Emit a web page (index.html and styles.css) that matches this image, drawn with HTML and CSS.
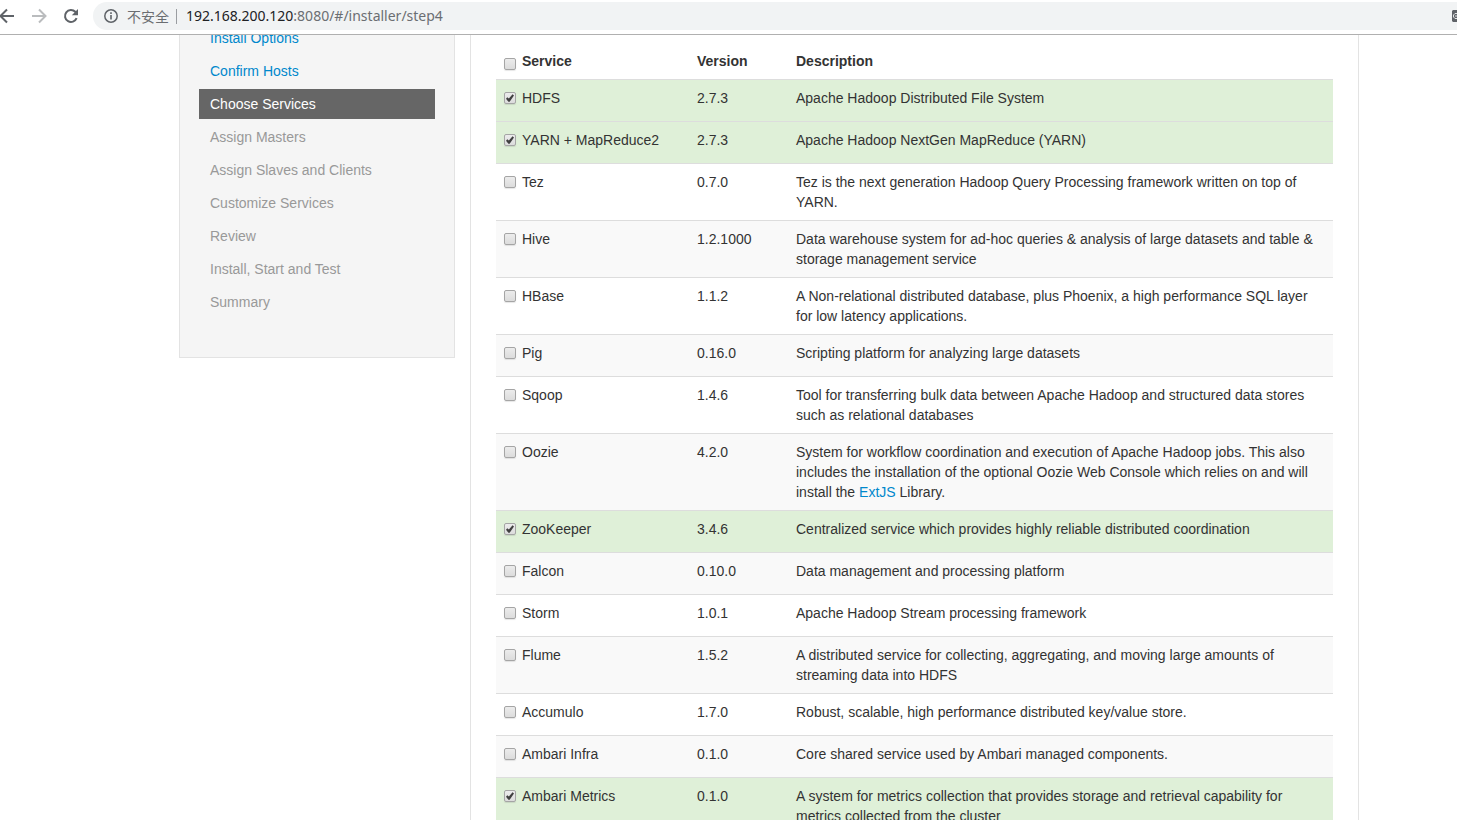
FILE: index.html
```html
<!DOCTYPE html>
<html lang="en">
<head>
<meta charset="utf-8">
<title>Ambari - Choose Services</title>
<link rel="stylesheet" href="styles.css">
</head>
<body>
<header class="toolbar">
  <div class="nav-buttons">
    <button class="tool-button" type="button" aria-label="Back">
      <svg width="16" height="16" viewBox="0 0 16 16"><path d="M15 8H2M8 1.500L1.500 8 8 14.500" fill="none" stroke="#5f6368" stroke-width="2"/></svg>
    </button>
    <button class="tool-button" type="button" aria-label="Forward" disabled>
      <svg width="16" height="16" viewBox="0 0 16 16"><path d="M1 8H14M8 1.500L14.500 8 8 14.500" fill="none" stroke="#babcbe" stroke-width="2"/></svg>
    </button>
    <button class="tool-button" type="button" aria-label="Reload">
      <svg width="16" height="16" viewBox="0 0 16 16"><path d="M13.600 10.200A6 6 0 1 1 12.300 3.800L14 5.500" fill="none" stroke="#5f6368" stroke-width="2"/><path d="M15 1V7.200H8.800Z" fill="#5f6368"/></svg>
    </button>
  </div>
  <div class="address-bar">
    <svg class="info-icon" width="14" height="14" viewBox="0 0 14 14"><circle cx="7" cy="7" r="6.200" fill="none" stroke="#5f6368" stroke-width="1.500"/><path d="M7 6V10.500M7 3.300V4.900" stroke="#5f6368" stroke-width="1.600"/></svg>
    <span class="security">不安全</span>
    <div class="url" role="textbox" aria-label="Address" contenteditable="true" spellcheck="false"><span class="url-host">192.168.200.120</span>:8080/#/installer/step4</div>
    <svg class="translate-icon" width="5" height="12" viewBox="0 0 5 12"><path d="M1 0H5V12H1L0 11V1Z" fill="#5f6368"/><path d="M5 3.500H3L1.500 5V7L3 8.500H5M3 6H5" fill="none" stroke="#e4e5e6" stroke-width="1"/></svg>
  </div>
</header>
<main class="page">
  <nav class="sidebar" aria-label="Installer steps">
    <ul class="steps">
      <li><a class="step" href="#step2">Install Options</a></li>
      <li><a class="step" href="#step3">Confirm Hosts</a></li>
      <li><a class="step step-active" href="#step4" aria-current="step">Choose Services</a></li>
      <li><a class="step step-disabled" href="#step5">Assign Masters</a></li>
      <li><a class="step step-disabled" href="#step6">Assign Slaves and Clients</a></li>
      <li><a class="step step-disabled" href="#step7">Customize Services</a></li>
      <li><a class="step step-disabled" href="#step8">Review</a></li>
      <li><a class="step step-disabled" href="#step9">Install, Start and Test</a></li>
      <li><a class="step step-disabled" href="#step10">Summary</a></li>
    </ul>
  </nav>
  <section class="panel">
    <table class="services">
      <colgroup><col class="col-service"><col class="col-version"><col></colgroup>
      <thead>
        <tr><th><label class="check check-all"><input type="checkbox"><span>Service</span></label></th><th>Version</th><th>Description</th></tr>
      </thead>
      <tbody>
        <tr class="selected"><td><label class="check"><input type="checkbox" checked>HDFS</label></td><td>2.7.3</td><td>Apache Hadoop Distributed File System</td></tr>
        <tr class="selected"><td><label class="check"><input type="checkbox" checked>YARN + MapReduce2</label></td><td>2.7.3</td><td>Apache Hadoop NextGen MapReduce (YARN)</td></tr>
        <tr><td><label class="check"><input type="checkbox">Tez</label></td><td>0.7.0</td><td>Tez is the next generation Hadoop Query Processing framework written on top of YARN.</td></tr>
        <tr><td><label class="check"><input type="checkbox">Hive</label></td><td>1.2.1000</td><td>Data warehouse system for ad-hoc queries &amp; analysis of large datasets and table &amp; storage management service</td></tr>
        <tr><td><label class="check"><input type="checkbox">HBase</label></td><td>1.1.2</td><td>A Non-relational distributed database, plus Phoenix, a high performance SQL layer for low latency applications.</td></tr>
        <tr><td><label class="check"><input type="checkbox">Pig</label></td><td>0.16.0</td><td>Scripting platform for analyzing large datasets</td></tr>
        <tr><td><label class="check"><input type="checkbox">Sqoop</label></td><td>1.4.6</td><td>Tool for transferring bulk data between Apache Hadoop and structured data stores such as relational databases</td></tr>
        <tr><td><label class="check"><input type="checkbox">Oozie</label></td><td>4.2.0</td><td>System for workflow coordination and execution of Apache Hadoop jobs. This also includes the installation of the optional Oozie Web Console which relies on and will install the <a href="#extjs">ExtJS</a> Library.</td></tr>
        <tr class="selected"><td><label class="check"><input type="checkbox" checked>ZooKeeper</label></td><td>3.4.6</td><td>Centralized service which provides highly reliable distributed coordination</td></tr>
        <tr><td><label class="check"><input type="checkbox">Falcon</label></td><td>0.10.0</td><td>Data management and processing platform</td></tr>
        <tr><td><label class="check"><input type="checkbox">Storm</label></td><td>1.0.1</td><td>Apache Hadoop Stream processing framework</td></tr>
        <tr><td><label class="check"><input type="checkbox">Flume</label></td><td>1.5.2</td><td>A distributed service for collecting, aggregating, and moving large amounts of streaming data into HDFS</td></tr>
        <tr><td><label class="check"><input type="checkbox">Accumulo</label></td><td>1.7.0</td><td>Robust, scalable, high performance distributed key/value store.</td></tr>
        <tr><td><label class="check"><input type="checkbox">Ambari Infra</label></td><td>0.1.0</td><td>Core shared service used by Ambari managed components.</td></tr>
        <tr class="selected"><td><label class="check"><input type="checkbox" checked>Ambari Metrics</label></td><td>0.1.0</td><td>A system for metrics collection that provides storage and retrieval capability for metrics collected from the cluster</td></tr>
      </tbody>
    </table>
  </section>
</main>
</body>
</html>
```
FILE: styles.css
```css
* { box-sizing: border-box; }

body {
  margin: 0;
  height: 100vh;
  display: flex;
  flex-direction: column;
  overflow: hidden;
  background: #fff;
  color: #333;
  font: 14px/20px "Liberation Sans", Arial, sans-serif;
}

a { color: #0088cc; text-decoration: none; }

/* Browser toolbar */
.toolbar {
  flex: none;
  display: flex;
  height: 35px;
  padding: 2px 0 4px;
  border-bottom: 1px solid #b0b0b0;
}

.nav-buttons {
  display: flex;
  align-items: center;
  gap: 16px;
  width: 93px;
  margin-left: -1px;
  margin-right: 1px;
}

.tool-button {
  display: flex;
  padding: 0;
  border: 0;
  background: none;
}

.address-bar {
  flex: 1;
  display: flex;
  align-items: center;
  padding-left: 11px;
  border-radius: 14px 0 0 14px;
  background: #f1f3f4;
  color: #6b6e72;
  font-family: "Noto Sans", "Noto Sans CJK SC", sans-serif;
}

.info-icon { margin-right: 9px; }

.security {
  padding-right: 7px;
  border-right: 1px solid #9a9da1;
  font-family: "Noto Sans CJK SC", sans-serif;
  line-height: 15px;
}

.url { flex: 1; padding-left: 9px; outline: 0; white-space: nowrap; }
.url-host { color: #202124; }

/* Page layout */
.page {
  flex: 1;
  min-height: 0;
  display: flex;
  align-items: flex-start;
  gap: 15px;
  padding: 0 98px 0 179px;
  overflow: hidden;
}

.sidebar {
  flex: none;
  width: 276px;
  padding: 0 19px 40px;
  border: 1px solid #e3e3e3;
  border-top: 0;
  background: #f5f5f5;
}

/* The list is scrolled partly under the toolbar */
.steps {
  display: flex;
  flex-direction: column;
  gap: 3px;
  margin: -12px 0 0;
  padding: 0;
  list-style: none;
}

.step { display: block; padding: 5px 11px; }
.step-active { background: #666; color: #fff; }
.step-disabled { color: #999; }

.panel {
  flex: 1;
  padding: 8px 25px;
  border: solid #e3e3e3;
  border-width: 0 1px;
}

/* Services table */
.services {
  width: 100%;
  table-layout: fixed;
  border-collapse: separate;
  border-spacing: 0;
}

.col-service { width: 193px; }
.col-version { width: 99px; }

.services th,
.services td {
  padding: 8px;
  text-align: left;
  vertical-align: top;
}

.services td { border-top: 1px solid #ddd; }
.services tbody tr:nth-child(even) { background: #f9f9f9; }
.services tbody tr.selected { background: #dff0d8; }

.check {
  display: flex;
  align-items: center;
  gap: 6px;
  margin-bottom: 5px;
}

.check-all { align-items: flex-end; margin: 0; }
.check-all input { margin-bottom: 1px; }

.check input {
  appearance: none;
  display: grid;
  place-items: center;
  width: 12px;
  height: 12px;
  margin: 0;
  border: 1px solid #a5a5a5;
  border-radius: 2px;
  background: linear-gradient(#ececec, #dcdcdc);
  box-shadow: 0 1px 1px #0000001a;
}

.check.check-all input { margin-bottom: 1px; }

.check input:checked::before {
  content: "";
  width: 8px;
  height: 8px;
  background: #404040;
  clip-path: polygon(0 58%, 16% 40%, 36% 56%, 82% 2%, 100% 18%, 46% 96%, 30% 96%);
}
```
